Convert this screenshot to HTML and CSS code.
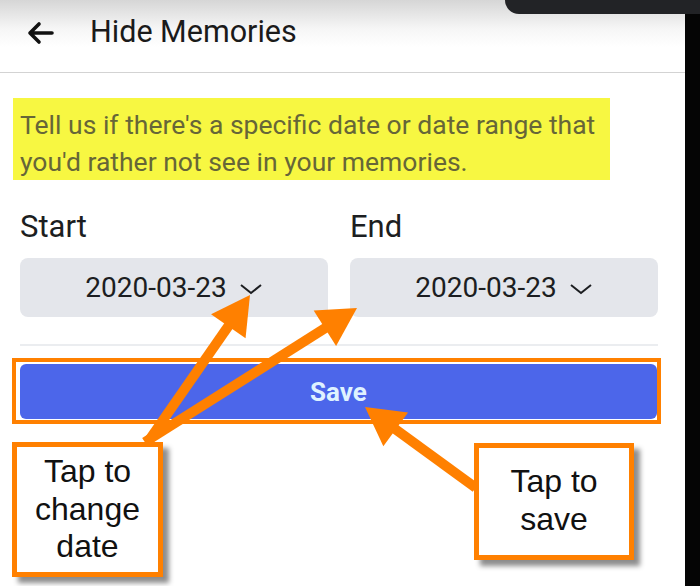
FILE: index.html
```html
<!DOCTYPE html>
<html lang="en">
<head>
    <meta charset="UTF-8">
    <title>Hide Memories</title>

    <link rel="stylesheet" href="styles.css">
</head>
<body>

    <div class="screen">

        <div class="app">
            <header class="topbar">
                <svg class="back" width="28" height="24" viewBox="0 0 28 24">
                    <path d="M26 12 H4 M13 3 L4 12 L13 21" fill="none" stroke="#111" stroke-width="3.6" stroke-linecap="round" stroke-linejoin="round"/>
                </svg>
                <h1>Hide Memories</h1>
            </header>

            <div class="content">
                <p class="intro">Tell us if there's a specific date or date range that<br>you'd rather not see in your memories.</p>

                <div class="range">
                    <div class="field">
                        <div class="label">Start</div>
                        <div class="date">
                            <span>2020-03-23</span>
                            <svg width="24" height="12" viewBox="0 0 24 12"><path d="M2 2 L12 10 L22 2" fill="none" stroke="#1c1e21" stroke-width="2"/></svg>
                        </div>
                    </div>
                    <div class="field">
                        <div class="label">End</div>
                        <div class="date">
                            <span>2020-03-23</span>
                            <svg width="24" height="12" viewBox="0 0 24 12"><path d="M2 2 L12 10 L22 2" fill="none" stroke="#1c1e21" stroke-width="2"/></svg>
                        </div>
                    </div>
                </div>

                <div class="divider"></div>

                <div class="highlight">
                    <div class="save">Save</div>
                </div>

                <div class="callouts">
                    <div class="callout callout-date">Tap to<br>change<br>date</div>
                    <div class="callout callout-save">Tap to<br>save</div>
                </div>
            </div>
        </div>

        <div class="bezel"></div>
        <div class="notch"></div>

        <!-- annotation arrows drawn over the screenshot -->
        <svg class="arrows" width="700" height="586" viewBox="0 0 700 586">
            <g fill="#ff8000" stroke="#ff8000" stroke-width="10">
                <g transform="translate(250 295) rotate(-55.2)">
                    <line x1="-179" y1="0" x2="-30" y2="0"/>
                    <polygon points="0,0 -38,-21 -38,21" stroke="none"/>
                </g>
                <g transform="translate(357 308) rotate(-32.3)">
                    <line x1="-251" y1="0" x2="-30" y2="0"/>
                    <polygon points="0,0 -38,-21 -38,21" stroke="none"/>
                </g>
                <g transform="translate(365 407) rotate(-143.9)">
                    <line x1="-137" y1="0" x2="-30" y2="0"/>
                    <polygon points="0,0 -38,-21 -38,21" stroke="none"/>
                </g>
            </g>
        </svg>

    </div>

</body>
</html>
```

FILE: styles.css
```css
body {
    margin: 0;
    padding: 0;
    overflow: hidden;
    background: #fff;
    font-family: Roboto, "Noto Sans", sans-serif;
    color: #1c1e21;
}

.screen {
    position: relative;
    display: flex;
    width: 700px;
    height: 586px;
}

.app {
    flex: 1;
    display: flex;
    flex-direction: column;
}

.bezel {
    width: 15px;
    background: #050505;
}

/* dark rounded edge of the phone at the top right */
.notch {
    position: absolute;
    top: 0;
    left: 505px;
    width: 195px;
    height: 14px;
    background: #222326;
    border-bottom-left-radius: 14px;
}

.topbar {
    box-sizing: border-box;
    height: 73px;
    padding: 0 0 9px 26px;
    display: flex;
    align-items: center;
    background: linear-gradient(#d6d6d6, #f6f6f6 40%, #fff 65%);
    border-bottom: 1px solid #d3d3d3;
}

.back {
    display: block;
    margin-top: 2px;
}

.topbar h1 {
    margin: 0 0 0 36px;
    font-size: 30.5px;
    line-height: 34px;
    font-weight: 400;
    color: #1a1a1a;
}

.content {
    padding: 0 27px 0 20px;
}

.intro {
    box-sizing: border-box;
    width: 597px;
    height: 82px;
    margin: 25px 0 0 -7px;
    padding: 8px 7px 0;
    background: #f7f742;
    color: #666638;
    font-size: 26.5px;
    line-height: 37px;
    white-space: nowrap;
}

.range {
    display: flex;
    gap: 22px;
    margin-top: 30px;
}

.field {
    flex: 1;
}

.label {
    font-size: 31px;
    line-height: 34px;
    margin-bottom: 14px;
}

.date {
    height: 59px;
    display: flex;
    align-items: center;
    justify-content: center;
    gap: 12px;
    background: #e4e6eb;
    border-radius: 8px;
    font-size: 28px;
}

.date svg {
    margin-top: 2px;
}

.divider {
    height: 2px;
    margin-top: 27px;
    background: #ebedf0;
}

.highlight {
    margin: 12px -3px 0 -8px;
    padding: 2px 0 1px 4px;
    border: 4px solid #ff8000;
}

.save {
    height: 55px;
    display: flex;
    align-items: center;
    justify-content: center;
    background: #4c66ea;
    border-radius: 6px;
    color: #dff2ff;
    font-size: 26px;
    font-weight: 700;
}

.callouts {
    display: flex;
    align-items: flex-start;
    margin: 18px 24px 0 -8px;
}

.callout {
    box-sizing: border-box;
    background: #fff;
    border: 5px solid #ff8000;
    box-shadow: 6px 6px 5px rgba(0, 0, 0, 0.45);
    font-family: "Liberation Sans", Arial, sans-serif;
    font-size: 32px;
    line-height: 37.5px;
    text-align: center;
    color: #111;
}

.callout-date {
    width: 151px;
    height: 135px;
    padding-top: 6px;
}

.callout-save {
    width: 160px;
    height: 117px;
    margin: 1px 0 0 auto;
    padding-top: 15px;
}

.arrows {
    position: absolute;
    top: 0;
    left: 0;
    pointer-events: none;
}
```
